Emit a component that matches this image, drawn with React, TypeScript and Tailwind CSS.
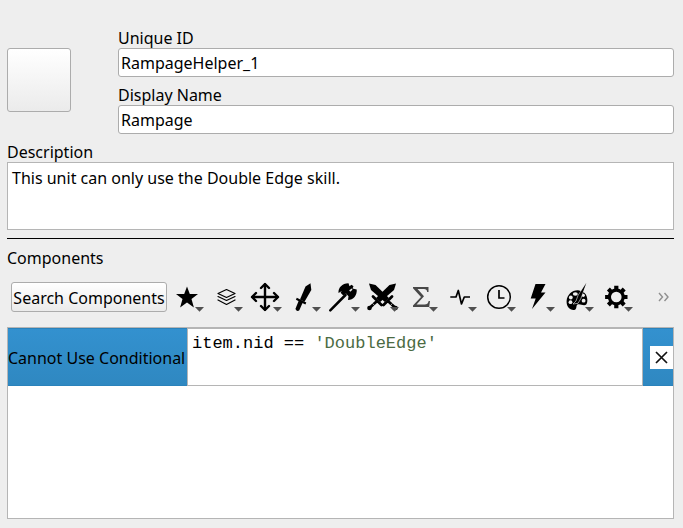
import React from "react";

const solid = { fill: "#000" };
const line = { fill: "none", stroke: "#000" };

const tools: { name: string; icon: React.ReactNode }[] = [
  {
    name: "Favorites",
    icon: <path {...solid} d="M19 4.500l2.800 7.500h8.200l-6.500 5 2.400 8.500-6.900-5.100-6.900 5.100 2.400-8.500-6.500-5h8.200z" />,
  },
  {
    name: "Layers",
    icon: (
      <g {...line} strokeWidth="1.2" strokeLinejoin="round" strokeLinecap="round">
        <path d="M19.500 7.500l8.500 4-8.500 4-8.500-4z" />
        <path d="M11 14.500l8.500 4 8.500-4" />
        <path d="M11 18l8.500 4.500 8.500-4.500" />
      </g>
    ),
  },
  {
    name: "Movement",
    icon: (
      <g {...line} strokeWidth="2.400" strokeLinecap="round" strokeLinejoin="round">
        <path d="M19 2.500v25M6.500 15h25" />
        <path d="M15 6l4-4 4 4M15 24l4 4 4-4M10 11l-4 4 4 4M28 11l4 4-4 4" />
      </g>
    ),
  },
  {
    name: "Weapon",
    icon: (
      <g {...solid}>
        <path d="M25.500 1.200l-5 3.300-5.500 13 4.500 2.300 6.800-11.800z" />
        <path d="M11.800 15.800l9.500 4.600-.9 2-9.500-4.600z" />
        <path d="M14 18l4 2-3.700 8.300c-1.500 1.600-4.300 0-3.600-2z" />
      </g>
    ),
  },
  {
    name: "Combat",
    icon: (
      <g {...solid}>
        <path d="M6.300 28.300L21.500 13" stroke="#000" strokeWidth="2.500" strokeLinecap="round" />
        <path d="M14.500 11c-.4-5.300 3.800-9.800 10-9.700l1 3 2-1.500 2 1.400-1 2.200 4.200 1c.6 5.800-3.300 10.400-8.700 10.600l.5-3.800-2.500-2.700-2.700 2-2.700-2.700 1.200-1.800z" />
        <path d="M25.200 8.200l2.600-1.700.7 1.200-2.300 2.100z" fill="#eee" />
      </g>
    ),
  },
  {
    name: "Crossed swords",
    icon: (
      <g {...solid}>
        <path d="M6 1.500l6.500 1.500L27 17l-4 4L8 8z" />
        <path d="M33 1.500L26.500 3 12 17l4 4L31 8z" />
        <path d="M20.800 21.500l8-8M18.200 21.500l-8-8" stroke="#eee" strokeWidth="1" />
        <path
          d="M20.500 23l8.500-8.500M18.500 23L10 14.500M26 20l6 5.500M13 20l-6 5.500"
          stroke="#000"
          strokeWidth="2.800"
          strokeLinecap="round"
        />
        <circle cx="32.500" cy="26" r="2.300" />
        <circle cx="6.500" cy="26" r="2.300" />
        <path d="M27.200 23.700l2.300-2.300M11.800 23.700l-2.300-2.300" stroke="#eee" strokeWidth=".7" />
      </g>
    ),
  },
  {
    name: "Formula",
    icon: (
      <path
        fill="#484848"
        d="M11 5h15.500v5h-1.300c-.3-2.300-1.200-3-3.200-3h-6.500l6.500 7.200-7.500 8.300h8c2.500 0 3.600-1 4.200-3.500H28L27.200 25H11v-1.500l8-8.500-8-8.700z"
      />
    ),
  },
  {
    name: "Status",
    icon: <path {...line} strokeWidth="1.700" strokeLinejoin="round" d="M9.300 15H15l2.300-6.500 3.200 13.500 2.800-7h5.700" />,
  },
  {
    name: "Time",
    icon: (
      <g {...line}>
        <circle cx="19" cy="15" r="11.300" strokeWidth="1.500" />
        <path d="M19 8v8h5.500" strokeWidth="1.700" />
      </g>
    ),
  },
  {
    name: "Charge",
    icon: <path {...solid} d="M16.500 2h10l-4.500 8.500h4.500L13 27l3.700-10.500h-5z" />,
  },
  {
    name: "Aesthetic",
    icon: (
      <g {...solid}>
        <path d="M21 8.500c-6-1-12 4-12.400 10.500-.3 5.500 3.200 9.300 7.400 9 3.700-.2 1.200-4.700 4-5.700 2.300-.8 5 1.800 8 .5 2.300-2.500 1.400-7.500-.3-10.500-1.700-2.300-4.200-3.500-6.700-3.800z" />
        <g fill="#eee">
          <ellipse cx="17.300" cy="12" rx="2.500" ry="1.700" />
          <circle cx="12.800" cy="15.500" r="1.900" />
          <circle cx="12.500" cy="20.200" r="1.900" />
          <circle cx="25.300" cy="13.300" r="1.600" />
          <circle cx="25.600" cy="18.700" r="1.900" />
        </g>
        <path d="M28.300 1L20 13.500l-2 5.500-3 3 5-.7 3-5z" stroke="#eee" strokeWidth=".6" />
        <path d="M28.300 1L21 13l2 1z" />
      </g>
    ),
  },
  {
    name: "Advanced",
    icon: (
      <g {...line}>
        <circle cx="19.300" cy="15" r="6.900" strokeWidth="3.200" />
        <g strokeWidth="4.200">
          <path d="M19.300 3.800v4M19.300 22.200v4M8.100 15h4M26.500 15h4" />
          <path d="M11.400 7.100l2.800 2.800M24.400 20.100l2.800 2.800M27.200 7.100l-2.800 2.800M14.200 20.100l-2.800 2.800" />
        </g>
      </g>
    ),
  },
];

function Field({ id, label, value }: { id: string; label: string; value: string }) {
  return (
    <div className="flex flex-col">
      <label htmlFor={id} className="h-[19px] leading-[19px]">
        {label}
      </label>
      <input
        id={id}
        defaultValue={value}
        className="h-[29px] w-full rounded-[3px] border border-[#acacac] bg-white px-[2px] outline-none"
      />
    </div>
  );
}

function ToolButton({ name, children }: { name: string; children: React.ReactNode }) {
  return (
    <button type="button" aria-label={name} className="h-[30px] w-[39px] shrink-0">
      <svg viewBox="0 0 39 30" className="block h-[30px] w-[39px]">
        {children}
        <path d="M27 25h9l-4.500 4.800z" fill="#505050" />
      </svg>
    </button>
  );
}

export default function App() {
  return (
    <main className="flex min-h-screen flex-col bg-[#eee] pt-[29px] pr-[9px] pb-[9px] pl-[7px] font-['Noto_Sans',sans-serif] text-base text-black">
      <section className="flex gap-[47px]">
        <button
          type="button"
          aria-label="Choose icon"
          className="mt-[19px] size-16 shrink-0 rounded-[3px] border border-[#acacac] bg-linear-to-b from-white to-[#ebebeb]"
        />
        <div className="flex min-w-0 flex-1 flex-col gap-[9px]">
          <Field id="unique-id" label="Unique ID" value="RampageHelper_1" />
          <Field id="display-name" label="Display Name" value="Rampage" />
        </div>
      </section>

      <section className="mt-[9px] flex flex-col">
        <label htmlFor="description" className="h-[19px] leading-[19px]">
          Description
        </label>
        <textarea
          id="description"
          defaultValue="This unit can only use the Double Edge skill."
          className="block h-[68px] w-full resize-none border border-[#b5b5b5] bg-white px-1 py-[5px] leading-5 outline-none"
        />
      </section>

      <hr className="mt-2 border-t border-black" />

      <h2 className="mt-[10px] h-[19px] leading-[19px]">Components</h2>

      <div className="mt-[14px] flex h-[30px] items-center pl-1">
        <button
          type="button"
          className="mr-[1px] h-[30px] w-[156px] shrink-0 rounded-[3px] border border-[#acacac] bg-linear-to-b from-white to-[#ebebeb] pt-[2px] whitespace-nowrap"
        >
          Search Components
        </button>
        {tools.map((tool) => (
          <ToolButton key={tool.name} name={tool.name}>
            {tool.icon}
          </ToolButton>
        ))}
        <button type="button" aria-label="More tools" className="mr-1 ml-auto shrink-0">
          <svg viewBox="0 0 12 10" className="block h-[10px] w-3" fill="none" stroke="#8f8f8f" strokeWidth="1.400">
            <path d="M1 1l3.500 4L1 9M6.500 1L10 5 6.500 9" />
          </svg>
        </button>
      </div>

      <section className="mt-[15px] flex min-h-[192px] flex-1 flex-col border border-[#b5b5b5] bg-white">
        <div className="flex h-[58px]">
          <label
            htmlFor="condition"
            className="flex w-[179px] shrink-0 items-center border-y border-[#2a82bb] bg-linear-to-b from-[#3391cf] to-[#2f88c1] pt-[2px] whitespace-nowrap"
          >
            Cannot Use Conditional
          </label>
          <div className="relative min-w-0 flex-1 border border-[#b5b5b5] bg-white font-['Liberation_Mono',monospace] text-[17px] leading-5">
            <div aria-hidden="true" className="px-1 py-[5px] whitespace-pre">
              item.nid == <span className="text-[#4b6b43]">'DoubleEdge'</span>
            </div>
            <textarea
              id="condition"
              spellCheck={false}
              defaultValue="item.nid == 'DoubleEdge'"
              className="absolute inset-0 resize-none bg-transparent px-1 py-[5px] text-transparent caret-black outline-none"
            />
          </div>
          <div className="flex w-[30px] shrink-0 items-center justify-end border-y border-[#2a82bb] bg-linear-to-b from-[#3391cf] to-[#2f88c1]">
            <button type="button" aria-label="Remove component" className="flex size-[23px] items-center justify-center bg-white">
              <svg viewBox="0 0 13 13" className="size-[13px]" fill="none" stroke="#111" strokeWidth="1.700">
                <path d="M1 1l11 11M12 1L1 12" />
              </svg>
            </button>
          </div>
        </div>
      </section>
    </main>
  );
}
